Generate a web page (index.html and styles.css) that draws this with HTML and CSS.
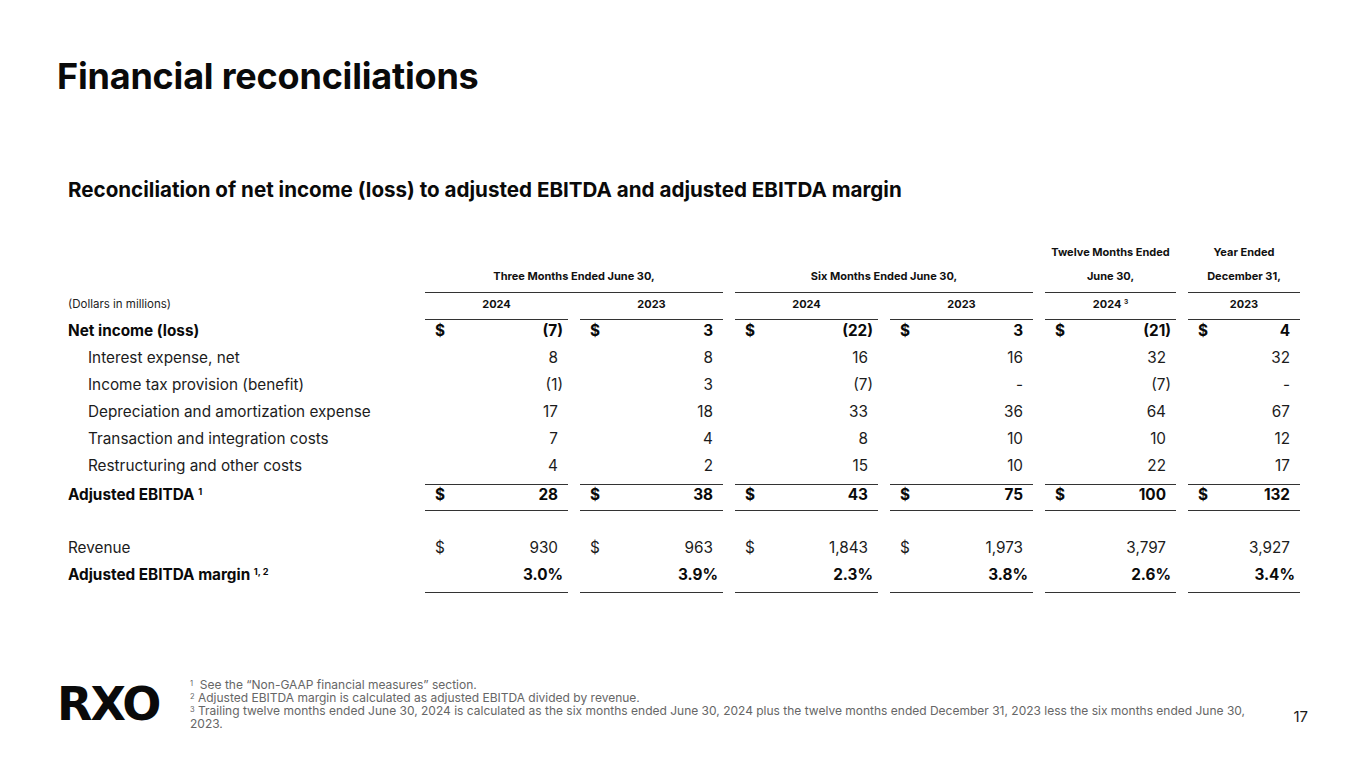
FILE: index.html
```html
<!DOCTYPE html>
<html lang="en">
<head>
<meta charset="utf-8">
<title>Financial reconciliations</title>
<link rel="stylesheet" href="styles.css">
</head>
<body>
<div class="slide">
  <h1 class="title">Financial reconciliations</h1>

  <section class="report">
    <h2 class="subtitle">Reconciliation of net income (loss) to adjusted EBITDA and adjusted EBITDA margin</h2>

    <div class="table">
      <div class="row head-row">
        <div></div>
        <div class="grp span2"><span>Three Months Ended June 30,</span></div>
        <div class="grp span2"><span>Six Months Ended June 30,</span></div>
        <div class="grp"><span>Twelve Months Ended</span><span>June 30,</span></div>
        <div class="grp"><span>Year Ended</span><span>December 31,</span></div>
      </div>

      <div class="row year-row">
        <div class="unit">(Dollars in millions)</div>
        <div class="yr">2024</div>
        <div class="yr">2023</div>
        <div class="yr">2024</div>
        <div class="yr">2023</div>
        <div class="yr">2024 <sup>3</sup></div>
        <div class="yr">2023</div>
      </div>

      <div class="row drow bold">
        <div class="lbl">Net income (loss)</div>
        <div class="v"><span>$</span><span class="hang">(7)</span></div>
        <div class="v"><span>$</span><span>3</span></div>
        <div class="v"><span>$</span><span class="hang">(22)</span></div>
        <div class="v"><span>$</span><span>3</span></div>
        <div class="v"><span>$</span><span class="hang">(21)</span></div>
        <div class="v"><span>$</span><span>4</span></div>
      </div>

      <div class="row drow">
        <div class="lbl sub">Interest expense, net</div>
        <div class="v"><span></span><span>8</span></div>
        <div class="v"><span></span><span>8</span></div>
        <div class="v"><span></span><span>16</span></div>
        <div class="v"><span></span><span>16</span></div>
        <div class="v"><span></span><span>32</span></div>
        <div class="v"><span></span><span>32</span></div>
      </div>

      <div class="row drow">
        <div class="lbl sub">Income tax provision (benefit)</div>
        <div class="v"><span></span><span class="hang">(1)</span></div>
        <div class="v"><span></span><span>3</span></div>
        <div class="v"><span></span><span class="hang">(7)</span></div>
        <div class="v"><span></span><span>-</span></div>
        <div class="v"><span></span><span class="hang">(7)</span></div>
        <div class="v"><span></span><span>-</span></div>
      </div>

      <div class="row drow">
        <div class="lbl sub">Depreciation and amortization expense</div>
        <div class="v"><span></span><span>17</span></div>
        <div class="v"><span></span><span>18</span></div>
        <div class="v"><span></span><span>33</span></div>
        <div class="v"><span></span><span>36</span></div>
        <div class="v"><span></span><span>64</span></div>
        <div class="v"><span></span><span>67</span></div>
      </div>

      <div class="row drow">
        <div class="lbl sub">Transaction and integration costs</div>
        <div class="v"><span></span><span>7</span></div>
        <div class="v"><span></span><span>4</span></div>
        <div class="v"><span></span><span>8</span></div>
        <div class="v"><span></span><span>10</span></div>
        <div class="v"><span></span><span>10</span></div>
        <div class="v"><span></span><span>12</span></div>
      </div>

      <div class="row drow">
        <div class="lbl sub">Restructuring and other costs</div>
        <div class="v"><span></span><span>4</span></div>
        <div class="v"><span></span><span>2</span></div>
        <div class="v"><span></span><span>15</span></div>
        <div class="v"><span></span><span>10</span></div>
        <div class="v"><span></span><span>22</span></div>
        <div class="v"><span></span><span>17</span></div>
      </div>

      <div class="row drow bold total">
        <div class="lbl">Adjusted EBITDA <sup>1</sup></div>
        <div class="v"><span>$</span><span>28</span></div>
        <div class="v"><span>$</span><span>38</span></div>
        <div class="v"><span>$</span><span>43</span></div>
        <div class="v"><span>$</span><span>75</span></div>
        <div class="v"><span>$</span><span>100</span></div>
        <div class="v"><span>$</span><span>132</span></div>
      </div>

      <div class="row drow revenue">
        <div class="lbl">Revenue</div>
        <div class="v"><span>$</span><span>930</span></div>
        <div class="v"><span>$</span><span>963</span></div>
        <div class="v"><span>$</span><span>1,843</span></div>
        <div class="v"><span>$</span><span>1,973</span></div>
        <div class="v"><span></span><span>3,797</span></div>
        <div class="v"><span></span><span>3,927</span></div>
      </div>

      <div class="row drow bold margin">
        <div class="lbl">Adjusted EBITDA margin <sup>1, 2</sup></div>
        <div class="v"><span></span><span class="hang">3.0%</span></div>
        <div class="v"><span></span><span class="hang">3.9%</span></div>
        <div class="v"><span></span><span class="hang">2.3%</span></div>
        <div class="v"><span></span><span class="hang">3.8%</span></div>
        <div class="v"><span></span><span class="hang">2.6%</span></div>
        <div class="v"><span></span><span class="hang">3.4%</span></div>
      </div>
    </div>
  </section>

  <footer class="footer">
    <div class="logo">RXO</div>
    <div class="notes">
      <div class="note"><sup>1</sup>&nbsp; See the “Non-GAAP financial measures” section.</div>
      <div class="note"><sup>2</sup> Adjusted EBITDA margin is calculated as adjusted EBITDA divided by revenue.</div>
      <div class="note"><sup>3</sup> Trailing twelve months ended June 30, 2024 is calculated as the six months ended June 30, 2024 plus the twelve months ended December 31, 2023 less the six months ended June&nbsp;30, 2023.</div>
    </div>
    <div class="page">17</div>
  </footer>
</div>
</body>
</html>
```

FILE: styles.css
```css
* { box-sizing: border-box; }

body {
  margin: 0;
  background: #ffffff;
  font-family: Inter, "Noto Sans", sans-serif;
  color: #111111;
}

.slide {
  width: 1365px;
  height: 768px;
  display: flex;
  flex-direction: column;
  overflow: hidden;
}

.title {
  margin: 0;
  padding: 52px 0 0 57px;
  font-size: 36px;
  font-weight: 700;
  line-height: 48px;
  letter-spacing: -0.2px;
  color: #0a0a0a;
}

.report {
  padding-left: 68px;
  margin-top: 76px;
}

.subtitle {
  margin: 0;
  font-size: 20.6px;
  font-weight: 700;
  line-height: 28px;
  color: #0a0a0a;
}

.table {
  margin-top: 36px;
}

.row {
  display: grid;
  grid-template-columns: 345px 143px 143px 143px 143px 131px 112px;
  column-gap: 12px;
}

.grp {
  display: flex;
  flex-direction: column;
  justify-content: flex-end;
  align-items: center;
  font-size: 11px;
  font-weight: 700;
  line-height: 24px;
  padding-bottom: 4px;
  border-bottom: 1.5px solid #333333;
  color: #111111;
}

.span2 { grid-column: span 2; }

.year-row {
  height: 27px;
  line-height: 20px;
  padding-top: 1px;
}

.year-row .yr {
  text-align: center;
  font-size: 11px;
  font-weight: 700;
  border-bottom: 1.5px solid #333333;
}

.unit {
  font-size: 11.5px;
  color: #222222;
}

sup {
  font-size: 0.6em;
  vertical-align: top;
  position: relative;
  top: -0.3em;
}

.drow {
  height: 27px;
  font-size: 15.3px;
  line-height: 22px;
  color: #1c1c1c;
}

.drow.bold { font-weight: 700; color: #0a0a0a; }

.lbl { white-space: nowrap; }
.lbl.sub { padding-left: 20px; }

.v {
  display: flex;
  justify-content: space-between;
  padding: 0 10px 0 10px;
}

.hang { margin-right: -5px; }

.total { margin-top: 2px; }
.total .v {
  border-top: 1.5px solid #333333;
  border-bottom: 1.5px solid #333333;
  line-height: 20px;
}

.revenue { margin-top: 26px; }

.margin { height: 29px; }
.margin .v {
  border-bottom: 1.5px solid #333333;
}

.footer {
  margin-top: auto;
  display: flex;
  align-items: center;
  padding: 0 0 38px 57px;
}

.logo {
  width: 133px;
  flex: none;
  font-family: "DejaVu Sans", sans-serif;
  font-weight: 700;
  font-size: 46px;
  line-height: 40px;
  letter-spacing: -2px;
  color: #0a0a0a;
}

.notes {
  width: 1060px;
  font-size: 12px;
  line-height: 13px;
  color: #666666;
}

.note sup {
  font-size: 7.5px;
  vertical-align: baseline;
  position: relative;
  top: -3px;
  line-height: 0;
}

.page {
  margin-left: auto;
  margin-right: 57px;
  align-self: flex-end;
  margin-bottom: 4px;
  font-size: 15px;
  line-height: 18px;
  color: #1a1a1a;
}
```
